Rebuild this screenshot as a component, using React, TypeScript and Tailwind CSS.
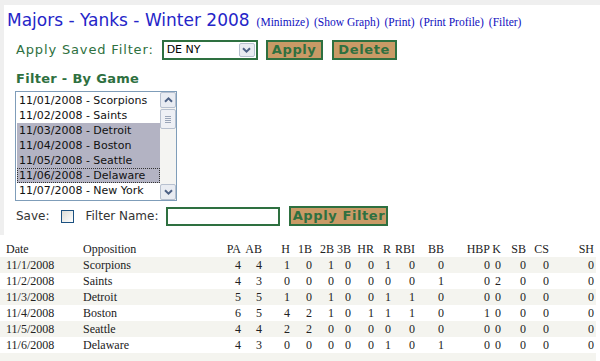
import React from 'react';

const GAMES = [
    '11/01/2008 - Scorpions',
    '11/02/2008 - Saints',
    '11/03/2008 - Detroit',
    '11/04/2008 - Boston',
    '11/05/2008 - Seattle',
    '11/06/2008 - Delaware',
    '11/07/2008 - New York',
];
const SELECTED = [2, 3, 4, 5];

const COLS: { name: string; w: number }[] = [
    { name: 'PA', w: 43 },
    { name: 'AB', w: 21 },
    { name: 'H', w: 28 },
    { name: '1B', w: 22 },
    { name: '2B', w: 22 },
    { name: '3B', w: 17 },
    { name: 'HR', w: 23 },
    { name: 'R', w: 17 },
    { name: 'RBI', w: 24 },
    { name: 'BB', w: 29 },
    { name: 'HBP', w: 46 },
    { name: 'K', w: 11 },
    { name: 'SB', w: 25 },
    { name: 'CS', w: 23 },
    { name: 'SH', w: 45 },
];

const ROWS: { date: string; opp: string; stats: number[] }[] = [
    { date: '11/1/2008', opp: 'Scorpions', stats: [4, 4, 1, 0, 1, 0, 0, 1, 0, 0, 0, 0, 0, 0, 0] },
    { date: '11/2/2008', opp: 'Saints', stats: [4, 3, 0, 0, 0, 0, 0, 0, 0, 1, 0, 2, 0, 0, 0] },
    { date: '11/3/2008', opp: 'Detroit', stats: [5, 5, 1, 0, 1, 0, 0, 1, 1, 0, 0, 0, 0, 0, 0] },
    { date: '11/4/2008', opp: 'Boston', stats: [6, 5, 4, 2, 1, 0, 1, 1, 1, 0, 1, 0, 0, 0, 0] },
    { date: '11/5/2008', opp: 'Seattle', stats: [4, 4, 2, 2, 0, 0, 0, 0, 0, 0, 0, 0, 0, 0, 0] },
    { date: '11/6/2008', opp: 'Delaware', stats: [4, 3, 0, 0, 0, 0, 0, 1, 0, 1, 0, 0, 0, 0, 0] },
];

const LINKS = ['Minimize', 'Show Graph', 'Print', 'Print Profile', 'Filter'];

const Chevron = ({ up }: { up?: boolean }) => (
    <svg width="9" height="6" viewBox="0 0 9 6" className={up ? 'rotate-180' : ''}>
        <path d="M1 1.2 L4.5 4.6 L8 1.2" fill="none" stroke="#4d6185" strokeWidth="2" />
    </svg>
);

const TanButton = ({ label, w }: { label: string; w: string }) => (
    <div className={`${w} h-[20px] bg-[#c99a66] border-2 border-[#2e7040] flex items-center justify-center text-[13px] font-bold text-[#2e7040] tracking-[0.6px]`}>
        {label}
    </div>
);

export default function App() {
    return (
        <div className="w-[600px] h-[361px] overflow-hidden bg-white pt-[5px] relative" style={{ fontFamily: '"DejaVu Sans", Verdana, sans-serif' }}>
            <div className="absolute left-0 top-0 w-[600px] h-[5px] bg-[#efefef]" />
            <div className="border-l-[4px] border-[#efefef] h-[230px]">
                {/* header line */}
                <div className="flex items-baseline pl-[3px] pt-[5px] h-[25px] leading-[20px] whitespace-nowrap">
                    <span className="text-[17px] text-[#2525c8]">Majors - Yanks - Winter 2008</span>
                    <span className="ml-[7px] text-[11.5px] text-[#1010c0] flex gap-[5px]" style={{ fontFamily: '"Liberation Serif", serif' }}>
                        {LINKS.map((l) => (
                            <span key={l}>({l})</span>
                        ))}
                    </span>
                </div>

                {/* saved filter */}
                <div className="flex items-center mt-[10px] pl-[12px] h-[20px]">
                    <span className="text-[13px] text-[#2e7040] tracking-[0.85px] whitespace-nowrap">Apply Saved Filter:</span>
                    <div className="ml-[8px] w-[96px] h-[20px] border-2 border-[#2e7040] bg-white flex items-center">
                        <span className="flex-1 pl-[3px] text-[11px] text-black">DE NY</span>
                        <div className="w-[16px] h-[14px] mr-[1px] bg-[#e8ebf1] border border-[#b7c0cf] rounded-[2px] flex items-center justify-center">
                            <Chevron />
                        </div>
                    </div>
                    <div className="ml-[8px]"><TanButton label="Apply" w="w-[57px]" /></div>
                    <div className="ml-[9px]"><TanButton label="Delete" w="w-[65px]" /></div>
                </div>

                {/* filter by game */}
                <div className="mt-[11px] pl-[12px] h-[16px] leading-[16px] text-[13px] font-bold text-[#2e7040] tracking-[0.3px]">Filter - By Game</div>

                <div className="mt-[4px] ml-[11px] w-[162px] h-[110px] border border-[#7f9db9] bg-white flex">
                    <div className="flex-1 pt-[1px] pl-[1px]">
                        {GAMES.map((g, i) => (
                            <div
                                key={g}
                                className={`h-[15px] leading-[15px] pl-[2px] text-[11px] text-[#111] whitespace-nowrap ${SELECTED.includes(i) ? 'bg-[#b3b3c3]' : ''} ${i === 5 ? 'outline outline-1 outline-dotted outline-[#333] -outline-offset-1' : ''}`}
                            >
                                {g}
                            </div>
                        ))}
                    </div>
                    <div className="w-[16px] h-full bg-[#f4f4f2] flex flex-col">
                        <div className="h-[16px] bg-[#e9ecf2] border border-[#b7c0cf] rounded-[2px] flex items-center justify-center">
                            <Chevron up />
                        </div>
                        <div className="h-[20px] mt-[1px] bg-[#eef0f5] border border-[#b7c0cf] rounded-[2px] flex flex-col items-center justify-center gap-[1px]">
                            <div className="w-[6px] h-[1px] bg-[#9aa5b8]" />
                            <div className="w-[6px] h-[1px] bg-[#9aa5b8]" />
                            <div className="w-[6px] h-[1px] bg-[#9aa5b8]" />
                            <div className="w-[6px] h-[1px] bg-[#9aa5b8]" />
                        </div>
                        <div className="flex-1" />
                        <div className="h-[16px] bg-[#e9ecf2] border border-[#b7c0cf] rounded-[2px] flex items-center justify-center">
                            <Chevron />
                        </div>
                    </div>
                </div>

                {/* save row */}
                <div className="flex items-center mt-[5px] pl-[12px] h-[20px] text-[12px] text-[#333]">
                    <span>Save:</span>
                    <div className="ml-[11px] w-[13px] h-[13px] border border-[#1c5180] bg-gradient-to-br from-[#dcdcd6] to-white" />
                    <span className="ml-[12px]">Filter Name:</span>
                    <div className="ml-[8px] w-[114px] h-[19px] border-2 border-[#2e7040] bg-white" />
                    <div className="ml-[9px]"><TanButton label="Apply Filter" w="w-[99px]" /></div>
                </div>
            </div>

            {/* stats table */}
            <table className="table-fixed border-collapse mt-[5px] w-[596px] text-[12px] leading-[16px] text-[#222]" style={{ fontFamily: '"Liberation Serif", "Times New Roman", serif' }}>
                <colgroup>
                    <col style={{ width: 83 }} />
                    <col style={{ width: 117 }} />
                    {COLS.map((c) => (
                        <col key={c.name} style={{ width: c.w }} />
                    ))}
                </colgroup>
                <thead>
                    <tr className="h-[17px]">
                        <td className="pl-[6px] p-0">Date</td>
                        <td className="p-0">Opposition</td>
                        {COLS.map((c) => (
                            <td key={c.name} className="p-0 pr-[2px] text-right">{c.name}</td>
                        ))}
                    </tr>
                </thead>
                <tbody>
                    {ROWS.map((r, i) => (
                        <tr key={r.date} className={`h-[16px] ${i % 2 === 0 ? 'bg-[#f4f4ef]' : 'bg-white'}`}>
                            <td className="pl-[6px] p-0">{r.date}</td>
                            <td className="p-0">{r.opp}</td>
                            {r.stats.map((s, j) => (
                                <td key={j} className="p-0 pr-[2px] text-right">{s}</td>
                            ))}
                        </tr>
                    ))}
                    <tr className="h-[16px] bg-[#f4f4ef]">
                        <td colSpan={17} className="p-0" />
                    </tr>
                </tbody>
            </table>
        </div>
    );
}
